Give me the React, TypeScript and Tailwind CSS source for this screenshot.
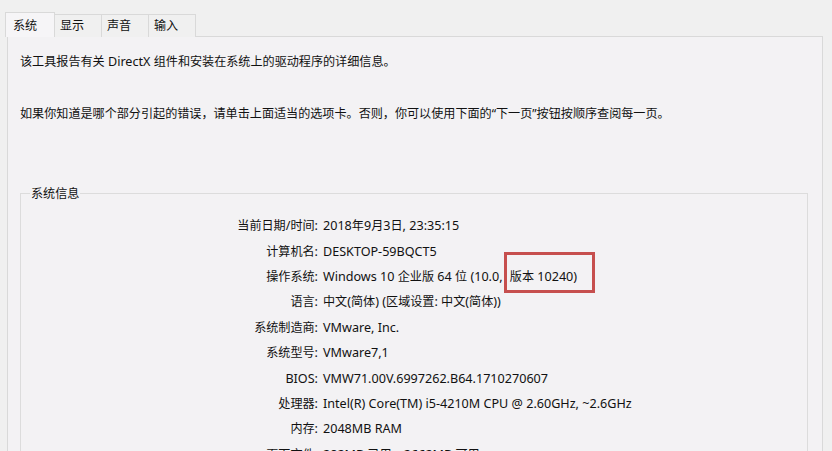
const rows: [string, string][] = [
  ["当前日期/时间:", "2018年9月3日, 23:35:15"],
  ["计算机名:", "DESKTOP-59BQCT5"],
  ["操作系统:", "Windows 10 企业版 64 位 (10.0, 版本 10240)"],
  ["语言:", "中文(简体) (区域设置: 中文(简体))"],
  ["系统制造商:", "VMware, Inc."],
  ["系统型号:", "VMware7,1"],
  ["BIOS:", "VMW71.00V.6997262.B64.1710270607"],
  ["处理器:", "Intel(R) Core(TM) i5-4210M CPU @ 2.60GHz, ~2.6GHz"],
  ["内存:", "2048MB RAM"],
  ["页面文件:", "282MB 已用，2662MB 可用"],
];

const tabs = ["系统", "显示", "声音", "输入"];

// Segoe UI runs a little wider than Noto Sans, so latin runs get a touch more size
function Mixed({ text }: { text: string }) {
  const parts = text.split(/([\u3000-\u303f\u4e00-\u9fff\uff00-\uffef“”]+)/);
  return (
    <span>
      {parts.map((p, i) =>
        i % 2 === 1 ? (
          <span key={i}>{p}</span>
        ) : (
          <span key={i} className="text-[12.6px]">
            {p}
          </span>
        )
      )}
    </span>
  );
}

function Value({ text }: { text: string }) {
  // the build number carries the red annotation frame
  const mark = "版本 10240)";
  if (!text.endsWith(mark)) return <Mixed text={text} />;
  return (
    <span>
      <Mixed text={text.slice(0, -mark.length)} />
      <span className="relative ml-[4px]">
        <Mixed text={mark} />
        <span className="absolute -left-[6px] -right-[18px] -top-[16px] -bottom-[8px] border-[3px] border-[#c64f4e]" />
      </span>
    </span>
  );
}

export default function App() {
  return (
    <div
      className="w-[832px] h-[451px] overflow-hidden bg-[#f0f0f0] text-[#111] text-[12.1px] pt-[12px] pl-[7px]"
      style={{ fontFamily: '"Noto Sans", "Noto Sans CJK SC", sans-serif' }}
    >
      {/* ── Tabs ───────────────────────────── */}
      <div className="flex items-end h-[25px] -ml-[2px] relative z-10">
        {tabs.map((t, i) =>
          i === 0 ? (
            <div
              key={t}
              className="w-[50px] h-[25px] pl-[7px] pt-[4px] bg-[#f6f5f7] border border-b-0 border-[#d9d9d9]"
            >
              {t}
            </div>
          ) : (
            <div
              key={t}
              className="w-[47px] h-[23px] pl-[5px] pt-[2px] bg-[#f0f0f0] border border-l-0 border-b-0 border-[#d9d9d9]"
            >
              {t}
            </div>
          )
        )}
      </div>

      {/* ── Panel ──────────────────────────── */}
      <div className="w-[816px] h-[500px] -mt-[1px] bg-[#f3f2f4] border border-[#d9d9d9] pl-[12px] pr-[14px] pt-[16px]">
        <p className="leading-[17px]">
          <Mixed text="该工具报告有关 DirectX 组件和安装在系统上的驱动程序的详细信息。" />
        </p>
        <p className="leading-[17px] mt-[35px]">
          如果你知道是哪个部分引起的错误，请单击上面适当的选项卡。否则，你可以使用下面的“下一页”按钮按顺序查阅每一页。
        </p>

        <fieldset className="mt-[63px] border border-[#dcdcdc] pt-[12px]">
          <legend className="ml-[9px] px-[1px] leading-[17px]">系统信息</legend>
          <div className="grid grid-cols-[297px_1fr] gap-x-[5px]">
            {rows.map(([k, v]) => (
              <div key={k} className="contents">
                <div className="h-[25.4px] flex items-center justify-end">
                  <Mixed text={k} />
                </div>
                <div className="h-[25.4px] flex items-center whitespace-nowrap">
                  <Value text={v} />
                </div>
              </div>
            ))}
          </div>
        </fieldset>
      </div>
    </div>
  );
}
